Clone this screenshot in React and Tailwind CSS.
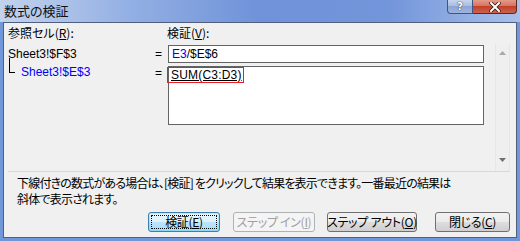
import React from "react";

const font = { fontFamily: '"Liberation Sans", "Noto Sans CJK JP", sans-serif' };
const jp = { fontFamily: '"Noto Sans CJK JP", sans-serif', fontFeatureSettings: '"palt"' };

function Btn({ children, w, disabled, focused, className = "" }) {
  return (
    <div
      className={
        "relative h-[20px] rounded-[3px] border flex items-center justify-center whitespace-nowrap text-[12px] leading-[14px] " +
        (disabled
          ? "border-[#adb2b5] bg-[#f4f4f4] text-[#a0a0a0] "
          : focused
          ? "border-[#3c7fb1] bg-[linear-gradient(#eaf6fd_0%,#d9f0fc_50%,#bee6fd_50%,#a7d9f5_100%)] text-black shadow-[inset_0_0_0_1px_#48d8fb55] "
          : "border-[#707070] bg-[linear-gradient(#f2f2f2_0%,#ebebeb_50%,#dddddd_50%,#cfcfcf_100%)] text-black ") +
        className
      }
      style={{ width: w, ...jp }}
    >
      {focused && (
        <div className="absolute inset-[2px] border border-dotted border-black rounded-[1px]" />
      )}
      <span className="relative tracking-[-0.3px]">{children}</span>
    </div>
  );
}

export default function App() {
  return (
    <div className="w-[520px] h-[241px] flex flex-col overflow-hidden bg-[#7097da]" style={font}>
      {/* Title bar */}
      <div className="relative h-[22px] shrink-0 bg-[linear-gradient(90deg,#c3d3ee_0%,#93afe3_25%,#6f92d9_50%,#7395da_75%,#a8c0ea_100%)]">
        <div className="pl-[4px] pt-[3px] text-[13px] leading-[16px] text-[#101010]" style={jp}>
          数式の検証
        </div>
        <div className="absolute top-0 right-[3px] flex">
          <div className="w-[26px] h-[14px] rounded-bl-[4px] border border-t-0 border-[#3f5683] bg-[linear-gradient(#c6d4ec_0%,#a7bbe0_50%,#8da5d4_50%,#9fb4dc_100%)] flex items-center justify-center">
            <span className="text-white font-bold text-[11px] leading-[12px] [text-shadow:0_0_1px_#1c2c50,0_0_1px_#1c2c50]" style={{ fontFamily: '"DejaVu Sans", sans-serif' }}>?</span>
          </div>
          <div className="w-[44px] h-[14px] rounded-br-[4px] border border-t-0 border-l-0 border-[#5a2a22] bg-[linear-gradient(#e59a88_0%,#d4705c_50%,#c2412c_50%,#d0624a_100%)] flex items-center justify-center">
            <svg width="12" height="10" viewBox="0 0 12 10">
              <path d="M2 1 L10 9 M10 1 L2 9" stroke="#3a1a14" strokeWidth="3.6" strokeLinecap="square" />
              <path d="M2 1 L10 9 M10 1 L2 9" stroke="#ffffff" strokeWidth="2" strokeLinecap="square" />
            </svg>
          </div>
        </div>
      </div>

      {/* Frame */}
      <div className="flex-1 flex px-[3px] pb-[3px]">
        <div className="flex-1 flex flex-col bg-[#f0f0f0] border border-[#4f5f7d]">
          {/* Top region */}
          <div className="h-[148px] flex pl-[4px]">
            <div className="flex flex-col text-[12px] text-black">
              <div className="mt-[3px] h-[14px] flex leading-[14px]">
                <div className="w-[159px]" style={jp}>
                  参照セル(<span className="underline">R</span>):
                </div>
                <div style={jp}>
                  検証(<span className="underline">V</span>):
                </div>
              </div>
              <div className="mt-[5px] h-[18px] flex items-center leading-[14px]">
                <div className="w-[147px]">Sheet3!$F$3</div>
                <div className="w-[13px]">=</div>
                <div className="w-[316px] h-[18px] border border-[#646464] bg-white pl-[3px] flex items-center">
                  <span className="text-[#0000ff]">E3</span>/$E$6
                </div>
              </div>
              <div className="mt-[3px] flex leading-[14px]">
                <div className="w-[147px] flex items-start">
                  <div className="ml-[1px] -mt-[8px] w-[6px] h-[15px] border-l border-b border-black" />
                  <div className="ml-[6px] -mt-[1px] text-[#0000ff]">Sheet3!$E$3</div>
                </div>
                <div className="w-[13px]">=</div>
                <div className="w-[316px] h-[59px] border border-[#646464] bg-white">
                  <div className="-ml-[2px] w-[77px] h-[16px] border-[1.5px] border-[#ee1c24] pl-[3px] flex items-center">
                    <span className="underline tracking-[0.2px]">SUM(C3:D3)</span>
                  </div>
                </div>
              </div>
            </div>
            {/* Scrollbar */}
            <div className="ml-[11px] mt-[21px] w-[15px] h-[127px] border-x border-[#e6e6e6] bg-[#efefef] flex flex-col items-center justify-between pt-[7px] pb-[9px]">
              <svg width="7" height="4" viewBox="0 0 7 4">
                <path d="M3.5 0 L7 4 L0 4 Z" fill="#a8a8a8" />
              </svg>
              <svg width="7" height="4" viewBox="0 0 7 4">
                <path d="M0 0 L7 0 L3.5 4 Z" fill="#707070" />
              </svg>
            </div>
          </div>

          {/* Divider */}
          <div className="ml-[4px] mr-[6px] h-px bg-[#d5d9df]" />

          {/* Help text */}
          <div className="pl-[13px] pt-[3px] text-[12px] leading-[16px] text-black tracking-[-0.8px] whitespace-nowrap" style={jp}>
            <div>下線付きの数式がある場合は、[検証] をクリックして結果を表示できます。一番最近の結果は</div>
            <div>斜体で表示されます。</div>
          </div>

          {/* Buttons */}
          <div className="mt-[5px] flex justify-end pr-[6px]">
            <Btn w={72} focused>
              検証(<span className="underline">E</span>)
            </Btn>
            <Btn w={82} disabled className="ml-[13px]">
              ステップ イン(<span className="underline">I</span>)
            </Btn>
            <Btn w={90} className="ml-[12px]">
              ステップ アウト(<span className="underline">O</span>)
            </Btn>
            <Btn w={75} className="ml-[18px]">
              閉じる(<span className="underline">C</span>)
            </Btn>
          </div>
        </div>
      </div>
    </div>
  );
}
